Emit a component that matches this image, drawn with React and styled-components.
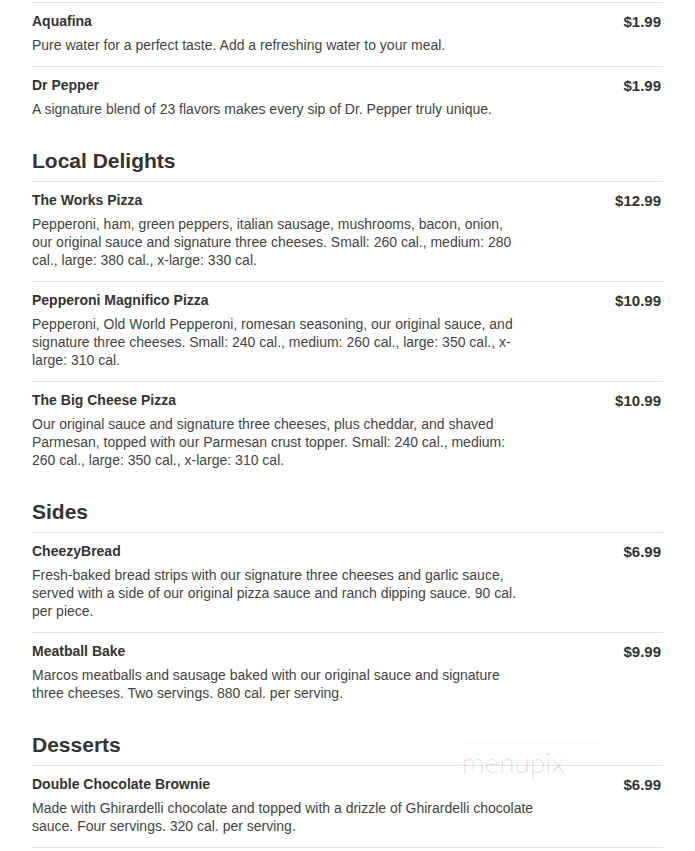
import styled, { createGlobalStyle } from "styled-components";

const GlobalStyle = createGlobalStyle`
    body {
        margin: 0;
        background: #fff;
        font-family: "Liberation Sans", Arial, sans-serif;
        color: #333;
    }
`;

const menu = [
    {
        title: null,
        items: [
            { name: "Aquafina", price: "$1.99", description: "Pure water for a perfect taste. Add a refreshing water to your meal." },
            { name: "Dr Pepper", price: "$1.99", description: "A signature blend of 23 flavors makes every sip of Dr. Pepper truly unique." },
        ],
    },
    {
        title: "Local Delights",
        items: [
            { name: "The Works Pizza", price: "$12.99", description: "Pepperoni, ham, green peppers, italian sausage, mushrooms, bacon, onion, our original sauce and signature three cheeses. Small: 260 cal., medium: 280 cal., large: 380 cal., x-large: 330 cal." },
            { name: "Pepperoni Magnifico Pizza", price: "$10.99", description: "Pepperoni, Old World Pepperoni, romesan seasoning, our original sauce, and signature three cheeses. Small: 240 cal., medium: 260 cal., large: 350 cal., x-large: 310 cal." },
            { name: "The Big Cheese Pizza", price: "$10.99", description: "Our original sauce and signature three cheeses, plus cheddar, and shaved Parmesan, topped with our Parmesan crust topper. Small: 240 cal., medium: 260 cal., large: 350 cal., x-large: 310 cal." },
        ],
    },
    {
        title: "Sides",
        items: [
            { name: "CheezyBread", price: "$6.99", description: "Fresh-baked bread strips with our signature three cheeses and garlic sauce, served with a side of our original pizza sauce and ranch dipping sauce. 90 cal. per piece." },
            { name: "Meatball Bake", price: "$9.99", description: "Marcos meatballs and sausage baked with our original sauce and signature three cheeses. Two servings. 880 cal. per serving." },
        ],
    },
    {
        title: "Desserts",
        closed: true,
        items: [
            { name: "Double Chocolate Brownie", price: "$6.99", description: "Made with Ghirardelli chocolate and topped with a drizzle of Ghirardelli chocolate sauce. Four servings. 320 cal. per serving." },
        ],
    },
];

const App = () => (
    <>
        <GlobalStyle />
        <Page>
            {menu.map((section, i) => (
                <Section key={i} $closed={section.closed}>
                    {section.title && <Heading>{section.title}</Heading>}
                    {section.items.map((item) => (
                        <Item key={item.name}>
                            <Info>
                                <Name>{item.name}</Name>
                                <Description>{item.description}</Description>
                            </Info>
                            <Price>{item.price}</Price>
                        </Item>
                    ))}
                </Section>
            ))}
            <Watermark>menupix</Watermark>
        </Page>
    </>
);

const Page = styled.div`
    position: relative;
    width: 631px;
    padding: 2px 32px 0;
`;

const Section = styled.section`
    display: flex;
    flex-direction: column;
    border-bottom: ${(p) => (p.$closed ? "1px solid #e3e3e3" : "none")};
`;

const Heading = styled.h2`
    margin: 19px 0 8px;
    font-size: 21px;
    line-height: 24px;
    font-weight: 700;
    color: #333;
`;

const Item = styled.div`
    display: flex;
    align-items: flex-start;
    padding: 9px 0 12px;
    border-top: 1px solid #e3e3e3;
`;

const Info = styled.div`
    flex: 1;
    min-width: 0;
`;

const Name = styled.div`
    font-size: 14px;
    line-height: 18px;
    font-weight: 700;
    color: #333;
    margin-bottom: 6px;
`;

const Description = styled.div`
    font-size: 14px;
    line-height: 18px;
    color: #444;
`;

const Price = styled.div`
    padding: 1px 2px 0 89px;
    font-size: 15px;
    line-height: 18px;
    font-weight: 700;
    color: #333;
    white-space: nowrap;
`;

const Watermark = styled.div`
    position: absolute;
    left: 462px;
    top: 746px;
    font-family: Lato, "Liberation Sans", sans-serif;
    font-weight: 300;
    font-size: 28px;
    line-height: 32px;
    color: rgba(0, 0, 0, 0.13);
    pointer-events: none;

    &::before {
        content: "";
        position: absolute;
        left: 3px;
        top: -4px;
        width: 134px;
        border-top: 1px dashed rgba(0, 0, 0, 0.05);
    }
`;

export default App;
